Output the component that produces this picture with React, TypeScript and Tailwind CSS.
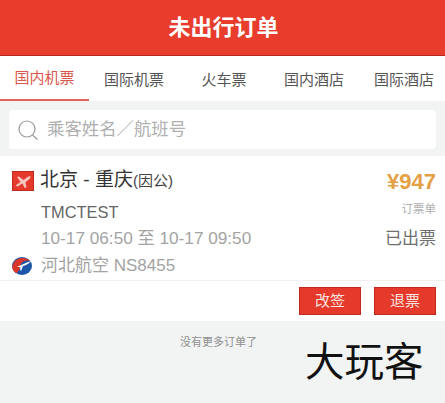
import React from 'react';

const tabs = ['国内机票', '国际机票', '火车票', '国内酒店', '国际酒店'];

const App: React.FC = () => {
  return (
    <div className="relative w-[445px] h-[403px] overflow-hidden bg-[#f2f3f3] font-['Liberation_Sans','Noto_Sans_CJK_SC',sans-serif]">
      {/* Header */}
      <div className="h-[56px] bg-[#e83c2d] border-b border-b-[#b8281c] flex items-center justify-center">
        <h1 className="ml-[2px] text-[22px] font-bold text-white leading-none">未出行订单</h1>
      </div>

      {/* Tabs */}
      <div className="h-[45px] bg-white flex">
        {tabs.map((tab, i) => (
          <div
            key={tab}
            className={
              i === 0
                ? 'w-[89px] shrink-0 flex items-center justify-center border-b-2 border-b-[#e0655a] text-[15px] text-[#d9574c] pt-[2px]'
                : 'w-[90px] shrink-0 flex items-center justify-center text-[15px] text-[#555555] pt-[4px]'
            }
          >
            {tab}
          </div>
        ))}
      </div>

      {/* Search */}
      <div className="h-[55px] px-[9px] pt-[9px]">
        <div className="h-[39px] bg-white rounded flex items-center pl-[8px]">
          <svg width="22" height="22" viewBox="0 0 22 22" fill="none" stroke="#9a9a9a" strokeWidth="1.2">
            <circle cx="10" cy="10" r="8" />
            <path d="M15.5 16l5 4.5" />
          </svg>
          <span className="ml-[8px] text-[17.4px] text-[#b0b0b0]">乘客姓名／航班号</span>
        </div>
      </div>

      {/* Order card */}
      <div className="h-[165px] bg-white">
        <div className="h-[125px] pl-[12px] pr-[9px] border-b border-b-[#f1f1f1] flex justify-between">
          <div className="flex flex-col">
            <div className="h-[49px] flex items-center">
              <div className="w-[22px] h-[20px] bg-[#e5392b] border border-[#c2291d] flex items-center justify-center">
                <svg width="18" height="16" viewBox="0 0 18 16" fill="#f7c6bc">
                  <path d="M1.5 12.5l5-3.500-3.500-5 2-.5 4.500 3.500 4-3c1.200-.8 2.600-1 3-.5s-.2 1.800-1.300 2.700l-3.700 3 1 5-1.700.8-2.500-4.500-4.500 3z" />
                </svg>
              </div>
              <span className="ml-[6px] text-[19px] text-[#333333]">北京 - 重庆</span>
              <span className="text-[15px] text-[#444444] mt-[2px]">(因公)</span>
            </div>
            <div className="pl-[29px] mt-[-5px] text-[16.4px] leading-[24px] text-[#666666]">TMCTEST</div>
            <div className="pl-[29px] mt-[2px] text-[17.2px] leading-[24px] text-[#a3a3a3]">10-17 06:50 至 10-17 09:50</div>
            <div className="mt-[4px] flex items-center">
              <svg width="22" height="20" viewBox="0 0 22 20" className="ml-[-1px]">
                <ellipse cx="11" cy="10" rx="10" ry="9" fill="#1d55a8" />
                <path d="M1.500 10c1-5 5-8 10-8 3 0 6 1 8 3-4-1-7 0-9 2l-2 6c-1 2-2 4-3 4-3-1-4.500-4-4-7z" fill="#d9362c" />
                <path d="M6 10.500c3-.5 7-3 14-5.500-2 3-6 4.500-8 5l-2 5c-1-1-1-2-.5-3.500z" fill="#ffffff" />
              </svg>
              <span className="ml-[8px] text-[17px] leading-[24px] text-[#a3a3a3]">河北航空 NS8455</span>
            </div>
          </div>
          <div className="flex flex-col items-end">
            <div className="mt-[13px] text-[22px] font-bold leading-[26px] text-[#e5a045]">¥947</div>
            <div className="mt-[6px] text-[11.5px] leading-[16px] text-[#b0b0b0]">订票单</div>
            <div className="mt-[10px] text-[17px] leading-[24px] text-[#6f6f6f]">已出票</div>
          </div>
        </div>
        <div className="h-[40px] pr-[9px] pt-[6px] flex justify-end gap-[13px]">
          <button type="button" className="w-[62px] h-[28px] bg-[#e5392b] border border-[#c2291d] text-[15px] text-[#fbe3df] flex items-center justify-center">
            改签
          </button>
          <button type="button" className="w-[62px] h-[28px] bg-[#e5392b] border border-[#c2291d] text-[15px] text-[#fbe3df] flex items-center justify-center">
            退票
          </button>
        </div>
      </div>

      {/* Footer note */}
      <div className="pl-[180px] pt-[14px] text-[11px] leading-[14px] text-[#8f8f8f]">没有更多订单了</div>

      {/* Watermark over the page */}
      <div className="absolute left-[305px] top-[340px] text-[39.5px] leading-[44px] text-[#111111] whitespace-nowrap">
        大玩客
      </div>
    </div>
  );
};

export default App;
